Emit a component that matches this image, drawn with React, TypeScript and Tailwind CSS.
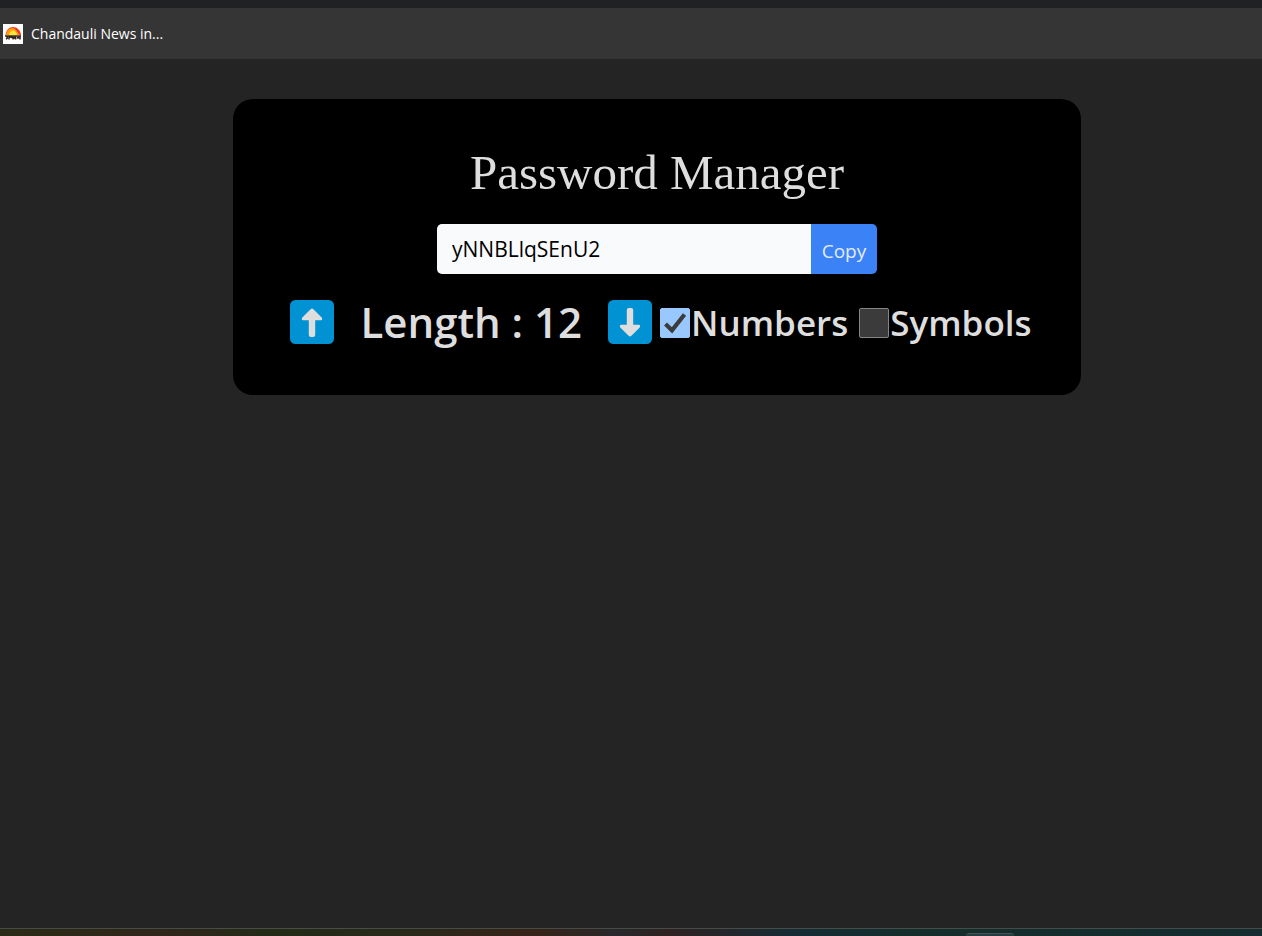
import { useState } from "react";

function ArrowTile({ down = false }: { down?: boolean }) {
  return (
    <svg viewBox="0 0 44 44" className="block size-11" aria-hidden="true">
      <rect width="44" height="44" rx="5.5" fill="#0092d2" />
      <path
        d="M20.6 9.2Q22 8 23.4 9.2L31.7 17.4Q33 19.8 30.8 20.3H25.2V35Q25.2 37 23.2 37H20.8Q18.8 37 18.8 35V20.3H13.2Q11 19.8 12.3 17.4Z"
        fill="#dedede"
        transform={down ? "rotate(180 22 22.5)" : undefined}
      />
    </svg>
  );
}

function NewsIcon() {
  return (
    <svg viewBox="0 0 20 20" className="size-5" aria-hidden="true">
      <rect width="20" height="20" fill="#fff" />
      <path d="M2.5 11C3 6 6 3 10 3s7.500 3 8 8Z" fill="#ef3c24" />
      <path d="M3 11C3.500 7 6 4 9 4c3 0 3.500 2 5 3.500L16.500 11Z" fill="#ff9a13" />
      <path d="M6 11c.5-3 2-4.500 4-4.500s3.500 1.500 4 4.500Z" fill="#ffe52e" />
      <path
        d="M2 12h16M3.500 12.500q2 1.500-.5 2.500M6 12v3.500M6 14q2-2 3 0M10 12v3.500M10 14.500l2-1M12.500 12v3.500M14 14.500q1.500-2 2 0M17 12v3.500"
        fill="none"
        stroke="#33221b"
        strokeWidth="1.500"
      />
    </svg>
  );
}

type OptionProps = {
  label: string;
  checked: boolean;
  onChange: (checked: boolean) => void;
};

function Option({ label, checked, onChange }: OptionProps) {
  return (
    <label className="flex items-center gap-px text-[35px] leading-[54px] font-semibold">
      <span className="grid">
        <input
          type="checkbox"
          checked={checked}
          onChange={(event) => onChange(event.target.checked)}
          className="col-start-1 row-start-1 size-[30px] appearance-none rounded-[2px] border border-[#858585] bg-[#3b3b3b] checked:border-[#99c8ff] checked:bg-[#99c8ff]"
        />
        {checked && (
          <svg viewBox="0 0 30 30" className="pointer-events-none col-start-1 row-start-1 size-[30px]" aria-hidden="true">
            <path d="M5.500 16 12 22.300 24.500 6.500" fill="none" stroke="#3b3b3b" strokeWidth="4.200" />
          </svg>
        )}
      </span>
      {label}
    </label>
  );
}

export default function App() {
  const [length, setLength] = useState(12);
  const [numbers, setNumbers] = useState(true);
  const [symbols, setSymbols] = useState(false);
  const password = "yNNBLlqSEnU2";

  return (
    <div className="flex min-h-screen flex-col bg-[#242424] font-['Open_Sans','Noto_Sans',sans-serif] text-[#dedede]">
      <div className="h-2 bg-[#202124]" />
      <nav className="flex h-[51px] items-center bg-[#353535] px-[3px]">
        <a href="#news" className="flex items-center gap-2 text-sm text-white">
          <NewsIcon />
          Chandauli News in...
        </a>
      </nav>

      <main className="flex grow items-start justify-center pt-10 pl-[52px]">
        <section className="flex w-full max-w-[848px] flex-col items-center rounded-[20px] bg-black pt-11 pb-[45px]">
          <h1 className="font-['Liberation_Serif',serif] text-[49px] leading-[60px]">Password Manager</h1>

          <div className="mt-[21px] flex">
            <input
              type="text"
              aria-label="Password"
              readOnly
              value={password}
              className="h-[50px] w-[374px] rounded-l-[5px] bg-[#f9fafc] px-[15px] text-[21px] text-black outline-none"
            />
            <button
              type="button"
              onClick={() => navigator.clipboard?.writeText(password)}
              className="h-[50px] w-[66px] rounded-r-[5px] bg-[#3b82f6] pt-1 text-[19px] text-[#e2ebfb]"
            >
              Copy
            </button>
          </div>

          <div className="mt-[21px] flex items-start gap-2 pl-2">
            <div className="flex items-center gap-[26px]">
              <button type="button" aria-label="Increase length" onClick={() => setLength(length + 1)}>
                <ArrowTile />
              </button>
              <h2 className="text-[42px] leading-[54px] font-semibold">Length : {length}</h2>
              <button type="button" aria-label="Decrease length" onClick={() => setLength(Math.max(1, length - 1))}>
                <ArrowTile down />
              </button>
            </div>
            <div className="flex gap-[11px] pt-px">
              <Option label="Numbers" checked={numbers} onChange={setNumbers} />
              <Option label="Symbols" checked={symbols} onChange={setSymbols} />
            </div>
          </div>
        </section>
      </main>

      <footer className="flex h-2 justify-end border-t border-[#454b45] bg-[linear-gradient(90deg,#2a2b16,#30261a_13%,#232b17_22%,#29291a_33%,#382318_42%,#28282b_49%,#2f2122_53%,#152c35_63%,#142e2b_73%,#142c2f)] pt-1 pr-[248px]">
        <div className="h-[3px] w-12 rounded-t-[4px] border-t border-[#405355] bg-[#273c3e]" />
      </footer>
    </div>
  );
}
